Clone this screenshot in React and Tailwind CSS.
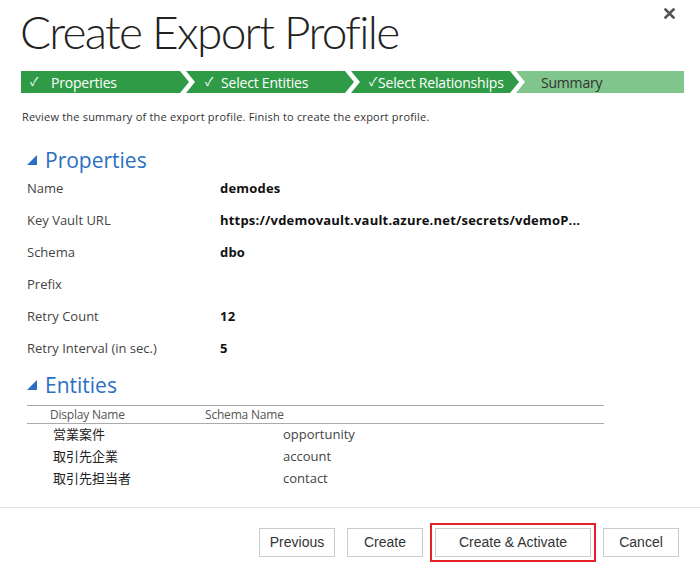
import React from "react";

const steps = [
  { label: "Properties", check: true, pad: "pl-[9px]", gap: "gap-[13px]" },
  { label: "Select Entities", check: true, pad: "pl-[19px]", gap: "gap-[8px]" },
  { label: "Select Relationships", check: true, pad: "pl-[18px]", gap: "gap-[1px]" },
  { label: "Summary", check: false, pad: "pl-[25px]", gap: "gap-0" },
];

const props = [
  ["Name", "demodes"],
  ["Key Vault URL", "https://vdemovault.vault.azure.net/secrets/vdemoP..."],
  ["Schema", "dbo"],
  ["Prefix", ""],
  ["Retry Count", "12"],
  ["Retry Interval (in sec.)", "5"],
];

const entities = [
  ["営業案件", "opportunity"],
  ["取引先企業", "account"],
  ["取引先担当者", "contact"],
];

function Tri() {
  return (
    <svg width="10" height="10" viewBox="0 0 10 10" className="shrink-0">
      <polygon points="10,0 10,10 0,10" fill="#2a6fc4" />
    </svg>
  );
}

export default function App() {
  return (
    <div className="w-[700px] h-[564px] bg-white overflow-hidden font-['Open_Sans','Noto_Sans_CJK_JP',sans-serif] text-[#333]">
      {/* header */}
      <div className="flex justify-between items-start h-[71px]">
        <h1 className="pl-[20px] pt-[4px] text-[46px] leading-[56px] font-light text-[#222] tracking-[-1.7px] font-['Lato','Open_Sans',sans-serif]">
          Create Export Profile
        </h1>
        <button className="mr-[24px] mt-[6px] w-[14px] h-[14px] flex items-center justify-center">
          <svg width="13" height="13" viewBox="0 0 12 12">
            <path d="M1.5 1.5 L10.5 10.5 M10.5 1.5 L1.5 10.5" stroke="#555" strokeWidth="2.6" />
          </svg>
        </button>
      </div>

      {/* steps */}
      <div className="flex ml-[21px] w-[663px] h-[22px]">
        {steps.map((s, i) => {
          const clip =
            i === 0
              ? "[clip-path:polygon(0_0,calc(100%-9px)_0,100%_50%,calc(100%-9px)_100%,0_100%)]"
              : i === steps.length - 1
              ? "[clip-path:polygon(0_0,100%_0,100%_100%,0_100%,9px_50%)] -ml-[3px]"
              : "[clip-path:polygon(0_0,calc(100%-9px)_0,100%_50%,calc(100%-9px)_100%,0_100%,9px_50%)] -ml-[3px]";
          const bg = s.check ? "bg-[#2f9b46] text-white" : "bg-[#80c58c] text-[#333]";
          return (
            <div
              key={i}
              className={`w-[168px] h-[22px] flex items-center ${s.pad} ${s.gap} ${bg} ${clip} text-[14px] tracking-[-0.2px]`}
            >
              {s.check && <span className="text-[12px]">✓</span>}
              <span>{s.label}</span>
            </div>
          );
        })}
      </div>

      <p className="ml-[22px] mt-[16px] text-[11px] leading-[16px] text-[#333] tracking-[0.2px]">
        Review the summary of the export profile. Finish to create the export profile.
      </p>

      {/* Properties */}
      <div className="ml-[27px] mt-[21px] flex items-center gap-[8px] h-[28px]">
        <Tri />
        <span className="text-[21px] leading-[28px] text-[#2a6fc4]">Properties</span>
      </div>
      <div className="ml-[27px] -mt-[1px]">
        {props.map(([k, v]) => (
          <div key={k} className="flex items-center h-[32px] text-[13px]">
            <span className="w-[193px] text-[#444]">{k}</span>
            <span className="font-bold text-[#111] tracking-[0.2px]">{v}</span>
          </div>
        ))}
      </div>

      {/* Entities */}
      <div className="ml-[27px] mt-[6px] flex items-center gap-[8px] h-[28px]">
        <Tri />
        <span className="text-[21px] leading-[28px] text-[#2a6fc4]">Entities</span>
      </div>
      <div className="ml-[27px] w-[577px] mt-[6px]">
        <div className="flex items-center h-[19px] border-t border-b border-[#aaa] text-[12px] text-[#555] tracking-[-0.2px]">
          <span className="w-[178px] pl-[23px]">Display Name</span>
          <span>Schema Name</span>
        </div>
        {entities.map(([a, b]) => (
          <div key={b} className="flex items-center h-[22px] text-[13px]">
            <span className="w-[256px] pl-[26px] text-[#222]">{a}</span>
            <span className="text-[#444]">{b}</span>
          </div>
        ))}
      </div>

      {/* footer */}
      <div className="mt-[17px] border-t border-[#e3e3e3] flex justify-end items-center gap-[12px] pr-[21px] pt-[15px] font-['Liberation_Sans',Arial,sans-serif] text-[14px] text-[#333]">
        <button className="w-[76px] h-[29px] border border-[#ccc] bg-white">Previous</button>
        <button className="w-[76px] h-[29px] border border-[#ccc] bg-white">Create</button>
        <div className="border-2 border-[#e5202b] p-[3px] -mx-[5px]">
          <button className="w-[156px] h-[29px] border border-[#ccc] bg-white block">Create &amp; Activate</button>
        </div>
        <button className="w-[76px] h-[29px] border border-[#ccc] bg-white">Cancel</button>
      </div>
    </div>
  );
}
